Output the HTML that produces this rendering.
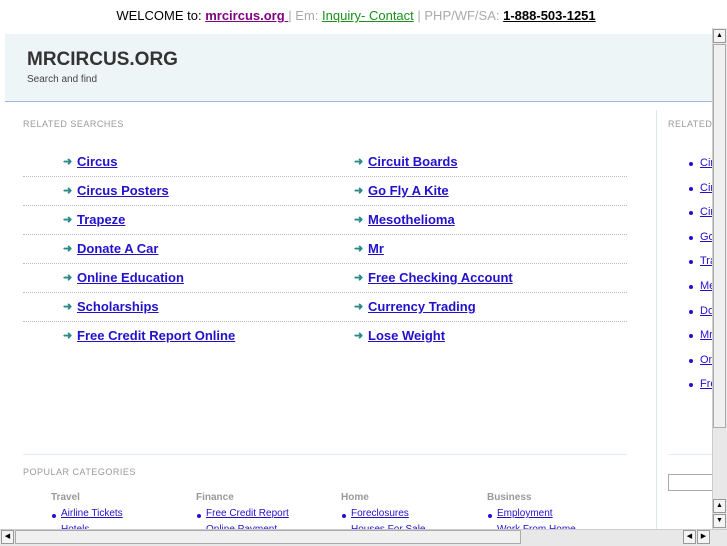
<html><head><style>
body{margin:0;width:727px;height:545px;overflow:hidden;background:#fff;font-family:"Liberation Sans",sans-serif;position:relative}
.a{position:absolute}
.top{top:8px;left:0;width:712px;text-align:center;font-size:13px;color:#000}
.top a{font-weight:bold;color:#800080;text-decoration:underline}
.lk{font-size:13px;font-weight:bold;color:#2211cc;text-decoration:underline}
.ar{color:#2a8a8a;font-size:11px;font-weight:bold}
.dot{height:0;border-top:1px dotted #bbb}
.rl{font-size:11px;color:#2211cc;text-decoration:underline}
.b{width:4px;height:4px;border-radius:2px;background:#2211cc}
.ch{font-size:10px;font-weight:bold;color:#999}
.cl{font-size:10px;color:#2211cc;text-decoration:underline}
</style></head><body>
<div class="a top">WELCOME to: <a>mrcircus.org </a><span style="color:#aaa">| Em: </span><span style="color:#1a8f1a;text-decoration:underline">Inquiry- Contact</span><span style="color:#aaa"> | PHP/WF/SA: </span><b style="text-decoration:underline">1-888-503-1251</b></div>
<div class="a" style="left:5px;top:34px;width:707px;height:67px;background:#eef5f7;border-bottom:1px solid #9cb8e0"></div>
<div class="a" style="left:27px;top:49px;font-size:19px;font-weight:bold;color:#333">MRCIRCUS.ORG</div>
<div class="a" style="left:27px;top:74px;font-size:10px;color:#444">Search and find</div>
<div class="a" style="left:23px;top:119px;font-size:9px;color:#999;letter-spacing:.5px">RELATED SEARCHES</div>
<div class="a" style="left:656px;top:110px;width:1px;height:420px;background:#dde6f0"></div>
<div class="a" style="left:668px;top:119px;font-size:9px;color:#999;letter-spacing:.5px">RELATED</div>
<div id="rows"></div>
<div class="a" style="left:23px;top:454px;width:604px;border-top:1px solid #e4ecf6"></div>
<div class="a" style="left:668px;top:454px;width:44px;border-top:1px solid #e4ecf6"></div>
<div class="a" style="left:23px;top:467px;font-size:9px;color:#999;letter-spacing:.5px">POPULAR CATEGORIES</div>
<div class="a" style="left:668px;top:474px;width:44px;height:15px;border:1px solid #aaa;border-right:none"></div>
<script>
var L=["Circus","Circus Posters","Trapeze","Donate A Car","Online Education","Scholarships","Free Credit Report Online"],R=["Circuit Boards","Go Fly A Kite","Mesothelioma","Mr","Free Checking Account","Currency Trading","Lose Weight"],h="";
for(var i=0;i<7;i++){var y=154+i*29;
h+='<div class="a ar" style="left:63px;top:'+(y+1)+'px">&#10140;</div><div class="a lk" style="left:77px;top:'+y+'px">'+L[i]+'</div>';
h+='<div class="a ar" style="left:354px;top:'+(y+1)+'px">&#10140;</div><div class="a lk" style="left:368px;top:'+y+'px">'+R[i]+'</div>';
if(i<6)h+='<div class="a dot" style="left:23px;top:'+(y+22)+'px;width:604px"></div>';}
var S=["Cir","Cir","Cir","Go","Tra","Me","Do","Mr","On","Fre"];
for(var j=0;j<10;j++){var y=157+j*24.6;h+='<div class="a b" style="left:689px;top:'+(y+5)+'px"></div><div class="a rl" style="left:700px;top:'+y+'px;width:12px;overflow:hidden">'+S[j]+'</div>';}
var C=[["Travel","Airline Tickets","Hotels",51],["Finance","Free Credit Report","Online Payment",196],["Home","Foreclosures","Houses For Sale",341],["Business","Employment","Work From Home",487]];
C.forEach(function(c){h+='<div class="a ch" style="left:'+c[3]+'px;top:492px">'+c[0]+'</div><div class="a b" style="left:'+(c[3]+1)+'px;top:514px"></div><div class="a cl" style="left:'+(c[3]+10)+'px;top:508px">'+c[1]+'</div><div class="a cl" style="left:'+(c[3]+10)+'px;top:524px">'+c[2]+'</div>';});
document.getElementById("rows").innerHTML=h;
</script>
<div class="a" style="left:712px;top:28px;width:15px;height:501px;background:#e8e8e8;border-left:1px solid #ccc"></div>
<div class="a" style="left:713px;top:29px;width:13px;height:14px;background:#f4f4f4;border:1px solid #999;box-sizing:border-box;font-size:7px;text-align:center;line-height:12px">▲</div>
<div class="a" style="left:713px;top:44px;width:13px;height:384px;background:#f0f0f0;border:1px solid #aaa;box-sizing:border-box"></div>
<div class="a" style="left:713px;top:499px;width:13px;height:14px;background:#f4f4f4;border:1px solid #999;box-sizing:border-box;font-size:7px;text-align:center;line-height:12px">▲</div>
<div class="a" style="left:713px;top:514px;width:13px;height:14px;background:#f4f4f4;border:1px solid #999;box-sizing:border-box;font-size:7px;text-align:center;line-height:12px">▼</div>
<div class="a" style="left:0;top:529px;width:727px;height:16px;background:#e8e8e8;border-top:1px solid #ccc"></div>
<div class="a" style="left:1px;top:530px;width:13px;height:14px;background:#f4f4f4;border:1px solid #999;box-sizing:border-box;font-size:7px;text-align:center;line-height:12px">◀</div>
<div class="a" style="left:15px;top:530px;width:506px;height:14px;background:#f0f0f0;border:1px solid #aaa;box-sizing:border-box"></div>
<div class="a" style="left:683px;top:530px;width:13px;height:14px;background:#f4f4f4;border:1px solid #999;box-sizing:border-box;font-size:7px;text-align:center;line-height:12px">◀</div>
<div class="a" style="left:697px;top:530px;width:13px;height:14px;background:#f4f4f4;border:1px solid #999;box-sizing:border-box;font-size:7px;text-align:center;line-height:12px">▶</div>
</body></html>
